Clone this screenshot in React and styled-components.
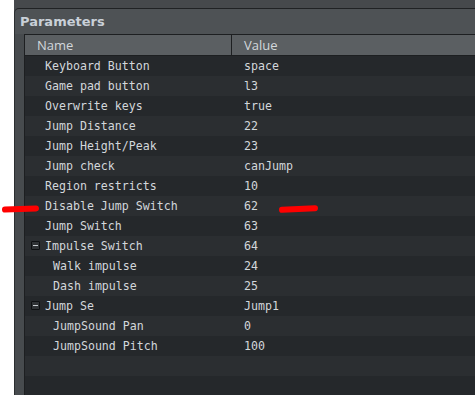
import React from "react";
import styled, { createGlobalStyle } from "styled-components";

const Global = createGlobalStyle`
  html, body {
    margin: 0;
    padding: 0;
    background: #ffffff;
    overflow: hidden;
  }
`;

const rows = [
  { name: "Keyboard Button", value: "space" },
  { name: "Game pad button", value: "l3" },
  { name: "Overwrite keys", value: "true" },
  { name: "Jump Distance", value: "22" },
  { name: "Jump Height/Peak", value: "23" },
  { name: "Jump check", value: "canJump" },
  { name: "Region restricts", value: "10" },
  { name: "Disable Jump Switch", value: "62", marked: true },
  { name: "Jump Switch", value: "63" },
  { name: "Impulse Switch", value: "64", group: true },
  { name: "Walk impulse", value: "24", child: true },
  { name: "Dash impulse", value: "25", child: true },
  { name: "Jump Se", value: "Jump1", group: true },
  { name: "JumpSound Pan", value: "0", child: true },
  { name: "JumpSound Pitch", value: "100", child: true },
  { name: "", value: "" },
  { name: "", value: "" },
];

export default function App() {
  return (
    <>
      <Global />
      <Page>
        <Gutter />
        <Window>
          <TopStrip />
          <Panel>
            <PanelTitle>Parameters</PanelTitle>
            <Body>
              <SideRail />
              <Table>
                <HeadRow>
                  <HeadCell>Name</HeadCell>
                  <HeadCell>Value</HeadCell>
                </HeadRow>
                {rows.map((r, i) => (
                  <Row key={i} odd={i % 2 === 0}>
                    <NameCell child={r.child}>
                      {r.group && <Collapse />}
                      {r.name}
                    </NameCell>
                    <ValueCell>{r.value}</ValueCell>
                    {r.marked && (
                      <>
                        <Mark left={-23} width={37} tilt={-2} />
                        <Mark left={254} width={39} tilt={-3} />
                      </>
                    )}
                  </Row>
                ))}
              </Table>
            </Body>
          </Panel>
        </Window>
      </Page>
    </>
  );
}

const Page = styled.div`
  display: flex;
  width: 475px;
  height: 395px;
  overflow: hidden;
`;

const Gutter = styled.div`
  width: 14px;
  flex: none;
  background: #ffffff;
`;

const Window = styled.div`
  flex: 1;
  display: flex;
  flex-direction: column;
  background: #46494c;
`;

const TopStrip = styled.div`
  height: 8px;
  flex: none;
  background: #46494c;
`;

const Panel = styled.div`
  flex: 1;
  display: flex;
  flex-direction: column;
  background: #4e5255;
  border-top: 1px solid #202224;
  border-left: 1px solid #2c2f31;
  border-top-left-radius: 5px;
`;

const PanelTitle = styled.div`
  height: 25px;
  flex: none;
  padding-left: 5px;
  display: flex;
  align-items: center;
  font-family: "DejaVu Sans", "Noto Sans", sans-serif;
  font-weight: 700;
  font-size: 13px;
  color: #c9d0d8;
`;

const Body = styled.div`
  flex: 1;
  display: flex;
  min-height: 0;
`;

const SideRail = styled.div`
  width: 9px;
  flex: none;
  background: #474b4e;
`;

const Table = styled.div`
  flex: 1;
  display: flex;
  flex-direction: column;
  border-top: 1px solid #1d1f21;
  border-left: 1px solid #1d1f21;
  background: #25282b;
`;

const HeadRow = styled.div`
  display: grid;
  grid-template-columns: 206px 1fr;
  height: 20px;
  flex: none;
  background: #5b5f62;
  border-bottom: 1px solid #1d1f21;
`;

const HeadCell = styled.div`
  display: flex;
  align-items: center;
  padding-left: 12px;
  font-family: "Open Sans", "Noto Sans", sans-serif;
  font-size: 13px;
  color: #d2d7dc;
  & + & {
    border-left: 1px solid #1d1f21;
    padding-left: 12px;
  }
`;

const Row = styled.div`
  position: relative;
  display: grid;
  grid-template-columns: 207px 1fr;
  height: 20px;
  flex: none;
  background: ${(p) => (p.odd ? "#25282b" : "#2b2e31")};
  font-family: "DejaVu Sans Mono", "Liberation Mono", monospace;
  font-size: 11.6px;
  color: #d3d7db;
`;

const NameCell = styled.div`
  display: flex;
  align-items: center;
  padding-left: ${(p) => (p.child ? 28 : 20)}px;
  position: relative;
  white-space: pre;
`;

const ValueCell = styled.div`
  display: flex;
  align-items: center;
  padding-left: 12px;
  white-space: pre;
`;

const Collapse = styled.span`
  position: absolute;
  left: 6px;
  top: 5px;
  width: 9px;
  height: 9px;
  box-sizing: border-box;
  border: 1px solid #0e1012;
  background: #303336;
  border-radius: 1px;
  &::after {
    content: "";
    position: absolute;
    left: 1px;
    right: 1px;
    top: 3px;
    height: 1px;
    background: #c8ccd0;
  }
`;

const Mark = styled.span`
  position: absolute;
  top: 10px;
  left: ${(p) => p.left}px;
  width: ${(p) => p.width}px;
  height: 6px;
  border-radius: 3px;
  background: #ff0000;
  transform: rotate(${(p) => p.tilt}deg);
`;
